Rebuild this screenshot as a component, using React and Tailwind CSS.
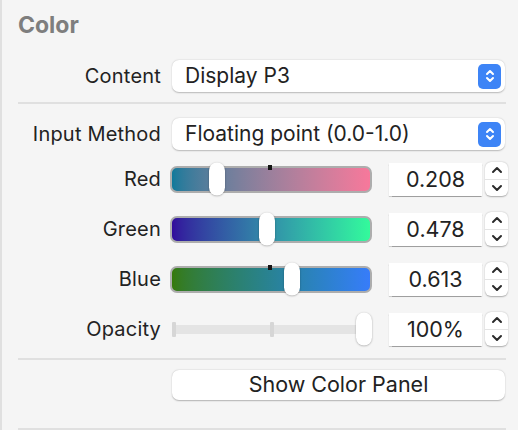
import React from 'react';

const font = { fontFamily: 'Inter, "Noto Sans", sans-serif' };

// small up/down chevrons used in popups and steppers
const Chevrons = ({ color = '#fff', w = 10, h = 16, stroke = 2 }) => (
  <svg width={w} height={h} viewBox="0 0 10 16" fill="none">
    <path d="M2 6 L5 3 L8 6" stroke={color} strokeWidth={stroke} strokeLinecap="round" strokeLinejoin="round" />
    <path d="M2 10 L5 13 L8 10" stroke={color} strokeWidth={stroke} strokeLinecap="round" strokeLinejoin="round" />
  </svg>
);

const Popup = ({ text }) => (
  <div className="flex items-center justify-between w-[333px] h-[32px] bg-white rounded-[7px] shadow-[0_0.5px_1.5px_rgba(0,0,0,0.25)] pl-[13px] pr-[4px]">
    <span className="text-[21px] text-[#222]">{text}</span>
    <div className="w-[23px] h-[25px] rounded-[5px] bg-[#3d84f6] flex items-center justify-center">
      <Chevrons w={10} h={16} stroke={2} />
    </div>
  </div>
);

const Stepper = () => (
  <div className="w-[23px] h-[34px] bg-white rounded-[6px] shadow-[0_0.5px_1.5px_rgba(0,0,0,0.3)] flex flex-col items-center">
    <div className="flex-1 flex items-center justify-center border-b border-[#e4e4e4] w-full">
      <svg width="12" height="8" viewBox="0 0 12 8" fill="none">
        <path d="M2 6 L6 2 L10 6" stroke="#2a2a2a" strokeWidth="2" strokeLinecap="round" strokeLinejoin="round" />
      </svg>
    </div>
    <div className="flex-1 flex items-center justify-center w-full">
      <svg width="12" height="8" viewBox="0 0 12 8" fill="none">
        <path d="M2 2 L6 6 L10 2" stroke="#2a2a2a" strokeWidth="2" strokeLinecap="round" strokeLinejoin="round" />
      </svg>
    </div>
  </div>
);

const Field = ({ value }) => (
  <div className="flex items-center ml-[17px]">
    <div className="w-[93px] h-[33px] bg-white shadow-[0_0.5px_1px_rgba(0,0,0,0.35)] flex items-center justify-center text-[21.5px] text-[#222]">
      {value}
    </div>
    <div className="ml-[3px]">
      <Stepper />
    </div>
  </div>
);

const Thumb = ({ left }) => (
  <div
    className="absolute top-1/2 -translate-y-1/2 w-[16px] h-[33px] bg-white rounded-full shadow-[0_0.5px_2px_rgba(0,0,0,0.35)]"
    style={{ left }}
  />
);

const Slider = ({ gradient, thumb, tick }) => (
  <div className="relative w-[202px] h-[34px] flex items-center">
    <div className={`w-full h-[27px] rounded-[7px] border-2 border-[#adadad] ${gradient}`} />
    {tick && <div className="absolute left-[98px] top-[3px] w-[4px] h-[5px] bg-[#151515]" />}
    <Thumb left={thumb} />
  </div>
);

const Label = ({ children }) => (
  <div className="w-[143px] text-right text-[20px] tracking-[0.01em] text-[#222] mr-[11px] shrink-0 whitespace-nowrap">{children}</div>
);

const Separator = ({ className = '' }) => <div className={`h-[2px] bg-[#e0e0e0] mr-[12px] ${className}`} />;

export default function App() {
  return (
    <div className="w-[518px] h-[430px] bg-[#f5f5f5] border-l-2 border-[#e0e0e0] pl-[16px] overflow-hidden" style={font}>
      <div className="h-[48px] pt-[2px] flex items-center text-[23px] font-bold text-[#7e7e7e]">Color</div>

      <div className="mt-[8px] h-[40px] flex items-center">
        <Label>Content</Label>
        <Popup text="Display P3" />
      </div>

      <Separator className="mt-[6px]" />

      <div className="mt-[10px] h-[40px] flex items-center">
        <Label>Input Method</Label>
        <Popup text="Floating point (0.0-1.0)" />
      </div>

      <div className="h-[50px] flex items-center">
        <Label>Red</Label>
        <div className="-ml-[2px] flex items-center">
          <Slider gradient="bg-gradient-to-r from-[#0e7a9b] to-[#f7789b]" thumb={39} tick />
          <Field value="0.208" />
        </div>
      </div>

      <div className="h-[50px] flex items-center">
        <Label>Green</Label>
        <div className="-ml-[2px] flex items-center">
          <Slider gradient="bg-gradient-to-r from-[#330a9c] to-[#33fa9b]" thumb={89} />
          <Field value="0.478" />
        </div>
      </div>

      <div className="h-[50px] flex items-center">
        <Label>Blue</Label>
        <div className="-ml-[2px] flex items-center">
          <Slider gradient="bg-gradient-to-r from-[#367a08] to-[#377cfa]" thumb={114} tick />
          <Field value="0.613" />
        </div>
      </div>

      <div className="h-[50px] flex items-center">
        <Label>Opacity</Label>
        <div className="-ml-[2px] flex items-center">
          <div className="relative w-[202px] h-[34px] flex items-center">
            <div className="absolute left-[2px] right-[2px] h-[9px] bg-[#e4e4e4] rounded-[2px]" />
            <div className="absolute left-[2px] w-[4px] h-[15px] bg-[#d6d6d6] rounded-[1px]" />
            <div className="absolute left-[100px] w-[4px] h-[15px] bg-[#d6d6d6] rounded-[1px]" />
            <Thumb left={186} />
          </div>
          <Field value="100%" />
        </div>
      </div>

      <Separator className="mt-[4px]" />

      <div className="mt-[10px] flex">
        <div className="w-[154px] shrink-0" />
        <button className="w-[333px] h-[30px] bg-white rounded-[7px] shadow-[0_0.5px_1.5px_rgba(0,0,0,0.28)] text-[21.5px] leading-none text-[#222]">
          Show Color Panel
        </button>
      </div>

      <Separator className="mt-[28px]" />
    </div>
  );
}
